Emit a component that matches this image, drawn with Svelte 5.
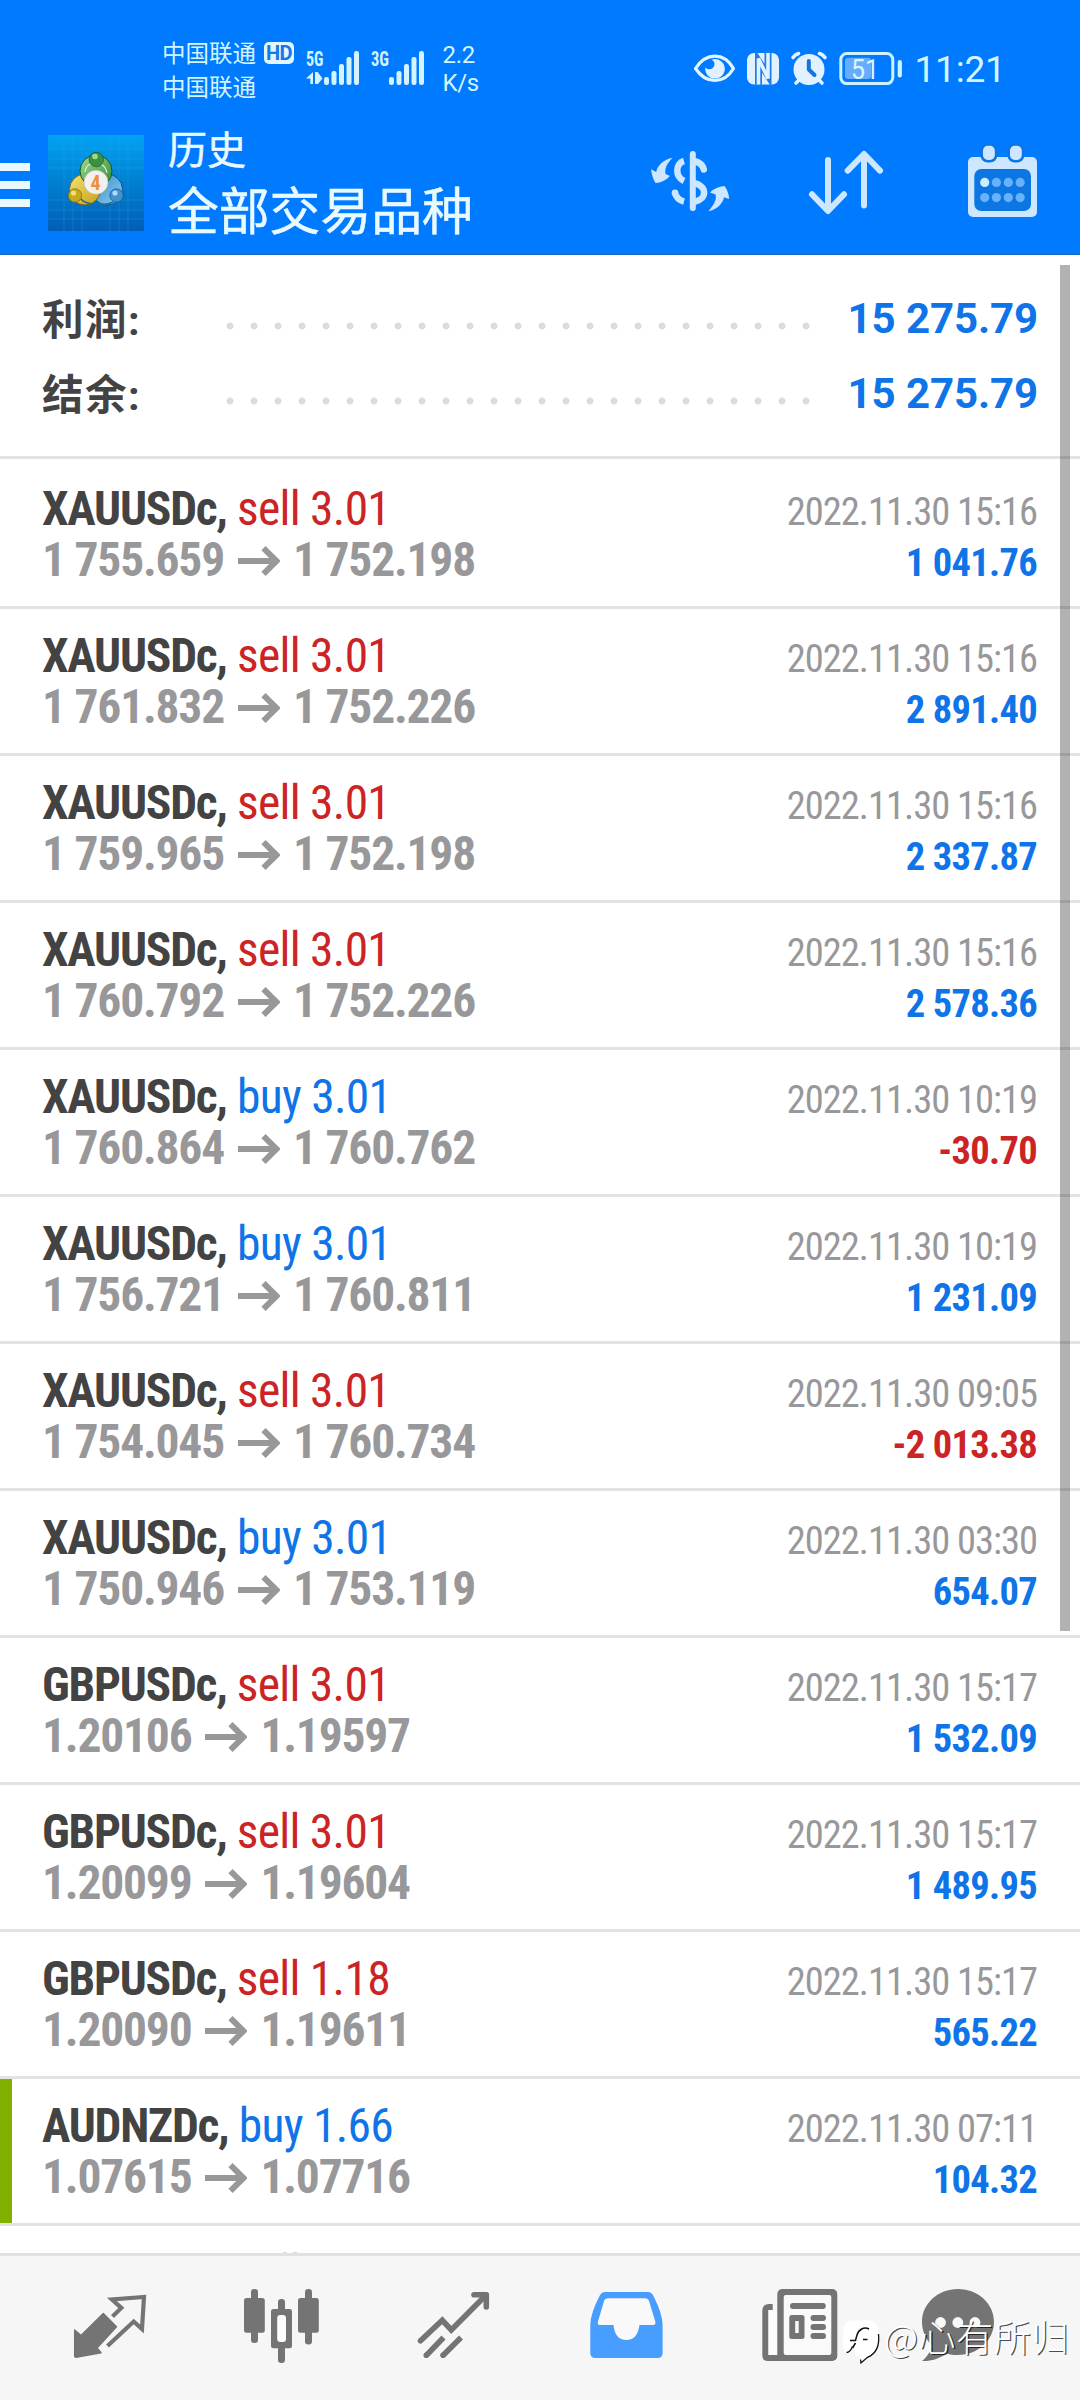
<script>
  const summary = [
    { label: '利润:', value: '15 275.79' },
    { label: '结余:', value: '15 275.79' },
  ];

  const deals = [
    { symbol: 'XAUUSDc', side: 'sell', lots: '3.01', open: '1 755.659', close: '1 752.198', time: '2022.11.30 15:16', profit: '1 041.76' },
    { symbol: 'XAUUSDc', side: 'sell', lots: '3.01', open: '1 761.832', close: '1 752.226', time: '2022.11.30 15:16', profit: '2 891.40' },
    { symbol: 'XAUUSDc', side: 'sell', lots: '3.01', open: '1 759.965', close: '1 752.198', time: '2022.11.30 15:16', profit: '2 337.87' },
    { symbol: 'XAUUSDc', side: 'sell', lots: '3.01', open: '1 760.792', close: '1 752.226', time: '2022.11.30 15:16', profit: '2 578.36' },
    { symbol: 'XAUUSDc', side: 'buy', lots: '3.01', open: '1 760.864', close: '1 760.762', time: '2022.11.30 10:19', profit: '-30.70' },
    { symbol: 'XAUUSDc', side: 'buy', lots: '3.01', open: '1 756.721', close: '1 760.811', time: '2022.11.30 10:19', profit: '1 231.09' },
    { symbol: 'XAUUSDc', side: 'sell', lots: '3.01', open: '1 754.045', close: '1 760.734', time: '2022.11.30 09:05', profit: '-2 013.38' },
    { symbol: 'XAUUSDc', side: 'buy', lots: '3.01', open: '1 750.946', close: '1 753.119', time: '2022.11.30 03:30', profit: '654.07' },
    { symbol: 'GBPUSDc', side: 'sell', lots: '3.01', open: '1.20106', close: '1.19597', time: '2022.11.30 15:17', profit: '1 532.09' },
    { symbol: 'GBPUSDc', side: 'sell', lots: '3.01', open: '1.20099', close: '1.19604', time: '2022.11.30 15:17', profit: '1 489.95' },
    { symbol: 'GBPUSDc', side: 'sell', lots: '1.18', open: '1.20090', close: '1.19611', time: '2022.11.30 15:17', profit: '565.22' },
    { symbol: 'AUDNZDc', side: 'buy', lots: '1.66', open: '1.07615', close: '1.07716', time: '2022.11.30 07:11', profit: '104.32', marked: true },
  ];

  const bars = [
    { x: 0, y: 77 },
    { x: 7.5, y: 71 },
    { x: 15, y: 64 },
    { x: 22.5, y: 57 },
    { x: 30, y: 51 },
  ];
  const calendarDots = [984.7, 996.4, 1008.3, 1020.2];
</script>

<div class="screen">
  <header>
    <div class="status">
      <div class="carriers">
        <div>中国联通</div>
        <div>中国联通</div>
      </div>
      <span class="hd">HD</span>
      <svg class="signal first" viewBox="305 48 56 40" width="56" height="40">
        <text x="306" y="66" textLength="17.5" lengthAdjust="spacingAndGlyphs">5G</text>
        <path d="M313 72V84H310.300V78.500H306ZM315 72H317.700L322.500 78.500 318 84H315Z" />
        {#each bars as b}
          <rect x={324 + b.x} y={b.y} width="5" height={85 - b.y} rx="2.2" />
        {/each}
      </svg>
      <svg class="signal second" viewBox="370 48 56 40" width="56" height="40">
        <text x="371" y="66" textLength="18" lengthAdjust="spacingAndGlyphs">3G</text>
        {#each bars as b}
          <rect x={389 + b.x} y={b.y} width="5" height={85 - b.y} rx="2.2" />
        {/each}
      </svg>
      <div class="speed">
        <div>2.2</div>
        <div>K/s</div>
      </div>
      <div class="right">
        <svg viewBox="692 50 46 38" width="46" height="38">
          <path d="M695.500 68.500C706 52 724 52 733.500 68.500C724 84.500 706 84.500 695.500 68.500Z" fill="none" stroke="#dff6ff" stroke-width="3.200" stroke-linejoin="round" />
          <path d="M713 59.200A9.800 9.800 0 1 1 705.300 67.500C708 70.500 713.500 69.500 714.300 65.500C714.900 62.500 714 61 711.500 60Z" fill="#e2f1ff" />
        </svg>
        <svg class="nfc" viewBox="746 50 34 38" width="34" height="38">
          <rect x="747" y="53" width="32" height="31.500" rx="7" fill="#e2f1ff" />
          <path d="M758.500 86V61L768 75.500V51" fill="none" stroke="#1a7fe8" stroke-width="7" />
          <path d="M758.500 84.500V58.500L768 78.500V53" fill="none" stroke="#e2f1ff" stroke-width="3.600" />
        </svg>
        <svg class="alarm" viewBox="790 50 38 38" width="38" height="38">
          <circle cx="809" cy="69.500" r="15.500" fill="#e2f1ff" />
          <path d="M793 57.500Q795 54.500 798.500 53.500M825 57.500Q823 54.500 819.500 53.500M796 83 801 78M822 83 817 78" fill="none" stroke="#dff6ff" stroke-width="3.600" stroke-linecap="round" />
          <path d="M808.800 61V69.500L814.500 75" fill="none" stroke="#1474dd" stroke-width="4" stroke-linecap="round" stroke-linejoin="round" />
        </svg>
        <svg class="battery" viewBox="838 50 66 38" width="66" height="38">
          <rect x="845" y="57.700" width="26" height="21.300" rx="3" fill="#66adff" />
          <rect x="840.800" y="53.600" width="52" height="30" rx="6" fill="none" stroke="#cdf3ff" stroke-width="3" />
          <rect x="897.700" y="60" width="4.200" height="17.500" rx="2" fill="#cdf3ff" />
          <text x="851" y="78.500" class="level" textLength="28" lengthAdjust="spacingAndGlyphs">51</text>
        </svg>
        <span class="clock">11:21</span>
      </div>
    </div>

    <div class="toolbar">
      <svg class="menu" viewBox="0 160 30 50" width="30" height="50">
        <path d="M0 163h30v8H0zM0 181h30v8H0zM0 199h30v8H0z" fill="#e8f8ff" />
      </svg>
      <svg class="logo" viewBox="48 135 96 96" width="96" height="96">
        <defs>
          <linearGradient id="sky" x1="0" y1="0" x2="0" y2="1">
            <stop offset="0" stop-color="#02a3f2" />
            <stop offset=".5" stop-color="#007fd0" />
            <stop offset="1" stop-color="#005fb6" />
          </linearGradient>
          <linearGradient id="green" x1="0" y1="0" x2="1" y2="1">
            <stop offset="0" stop-color="#a5dc90" />
            <stop offset="1" stop-color="#2c8a34" />
          </linearGradient>
          <linearGradient id="gold" x1="0" y1="0" x2="1" y2="1">
            <stop offset="0" stop-color="#f3e47a" />
            <stop offset="1" stop-color="#c99f10" />
          </linearGradient>
          <linearGradient id="azure" x1="0" y1="0" x2="1" y2="1">
            <stop offset="0" stop-color="#2f86c4" />
            <stop offset="1" stop-color="#8fd0f5" />
          </linearGradient>
        </defs>
        <rect x="48" y="135" width="96" height="96" fill="url(#sky)" />
        <path d="M64 135v96M73 135v96M82 135v96M110 135v96M119 135v96M128 135v96M48 149h96M48 159h96M48 168h96M48 200h96M48 210h96M48 219h96" stroke="#35a8ea" stroke-opacity=".28" fill="none" />
        <circle cx="107" cy="189.500" r="15.500" fill="url(#azure)" stroke="#0a4f8c" />
        <circle cx="85" cy="189.500" r="15.500" fill="url(#gold)" stroke="#6d6a20" />
        <circle cx="96" cy="171" r="16" fill="url(#green)" stroke="#17592b" />
        <path d="M81 199Q84 203 93 204M99 203Q104 206 113 202" fill="none" stroke="#2b6a8e" stroke-width="1.500" />
        <path d="M85 172Q86 165 91 164M101 164Q106 167 107 173" fill="none" stroke="#e0f3d4" stroke-width="1.200" />
        <circle cx="75" cy="195.500" r="6.700" fill="#c7a71d" stroke="#7b6511" stroke-width=".7" />
        <circle cx="73.500" cy="193" r="2.600" fill="#f0df7e" />
        <circle cx="116.500" cy="195.500" r="6.700" fill="#3f93cf" stroke="#135287" stroke-width=".7" />
        <circle cx="115" cy="193" r="2.600" fill="#a9dcf8" />
        <circle cx="96.300" cy="159.500" r="7.200" fill="#3c9140" stroke="#175a26" stroke-width=".7" />
        <circle cx="95" cy="156.500" r="2.800" fill="#a2d796" />
        <circle cx="96" cy="182.300" r="12" fill="#f3f1ef" stroke="#bcb7ae" stroke-width=".6" />
        <text x="90.500" y="190" class="four">4</text>
      </svg>
      <div class="titles">
        <div class="small">历史</div>
        <div class="large">全部交易品种</div>
      </div>
      <svg class="dollar" viewBox="648 145 84 74" width="84" height="74">
        <g fill="none" stroke="#cce7ff" stroke-width="6.500">
          <path d="M684 161C675 163.500 675 176.500 684 181" />
          <path d="M674.800 192.500Q676.500 199.500 684 201.500" />
          <path d="M692.800 154V208" stroke-width="6" stroke-linecap="round" />
          <path d="M694 161Q702.500 163 703.800 169.500" stroke-linecap="round" />
          <path d="M694 183C707.500 186 707.500 199 694 202" />
        </g>
        <circle cx="675" cy="192.800" r="3.300" fill="#cce7ff" />
        <path d="M672.500 157.800C664 159 657 166 656.300 172L651 169.300Q652 177.500 655.500 183Q664 182.500 670 176L665.500 174C664.500 168 667.500 163 672.500 157.800Z" fill="#cce7ff" />
        <path d="M708.300 211.200C714 205 717 199 715.500 194.500L710 192.500Q715 187 724.500 186Q729 192 729 199L724 197.300C723 203 717 210 708.300 211.200Z" fill="#cce7ff" />
      </svg>
      <svg class="sort" viewBox="806 145 80 74" width="80" height="74">
        <path d="M828 160V209M812 194.300 828 211 844 194.300M864 205.500V156M847.700 170.700 864 154 880 170.700" fill="none" stroke="#cce7ff" stroke-width="6" stroke-linecap="round" stroke-linejoin="round" />
      </svg>
      <svg class="calendar" viewBox="966 143 74 76" width="74" height="76">
        <rect x="968" y="157" width="69" height="60" rx="5" fill="#cce7ff" />
        <rect x="974.300" y="169" width="56.700" height="42" rx="7" fill="#0c76e2" />
        <g fill="#cce7ff" stroke="#0c76e2" stroke-width="2.600">
          <rect x="981.700" y="144.500" width="14.400" height="16.800" rx="6" />
          <rect x="1008.700" y="144.500" width="14.400" height="16.800" rx="6" />
        </g>
        {#each calendarDots as x, i}
          <circle cx={x} cy="182.400" r="4.600" fill={i === 0 ? '#cdeeff' : '#68b1ff'} />
          <circle cx={x} cy="197.600" r="4.600" fill="#68b1ff" />
        {/each}
      </svg>
    </div>
  </header>

  <main>
    <section class="summary">
      {#each summary as s}
        <div class="line">
          <span class="label">{s.label}</span>
          <span class="leader"></span>
          <span class="total">{s.value}</span>
        </div>
      {/each}
    </section>

    <section class="deals">
      {#each deals as d}
        <article class:marked={d.marked}>
          <div class="left">
            <div class="name"><b>{d.symbol},</b> <span class={d.side}>{d.side} {d.lots}</span></div>
            <div class="prices">
              <span>{d.open}</span>
              <svg viewBox="0 0 42 30" width="42" height="30">
                <path d="M0 15H37M25.500 2.200 38.500 15 25.500 27.800" fill="none" stroke="#98989a" stroke-width="6" />
              </svg>
              <span>{d.close}</span>
            </div>
          </div>
          <div class="info">
            <time>{d.time}</time>
            <div class="profit" class:loss={d.profit.startsWith('-')}>{d.profit}</div>
          </div>
        </article>
      {/each}
      <article>
        <div class="left">
          <div class="name"><b>XAUUSDc,</b> <span class="sell">sell 3.01</span></div>
        </div>
      </article>
    </section>
    <div class="scrollbar"></div>
  </main>

  <nav>
    <svg viewBox="70 2286 80 80" width="80" height="80">
      <path d="M103.300 2313.500 116.500 2326.700 97 2348 101 2352.800 76 2357.300Q74.700 2357.300 74.700 2356V2330L81 2335.500Z" fill="#747474" stroke="#747474" stroke-width="1.500" stroke-linejoin="round" />
      <path d="M112.500 2316.500 121.300 2307.900 112 2299.500 144 2297 142 2329 133.700 2321.500 107.500 2346" fill="none" stroke="#747474" stroke-width="4.200" />
    </svg>
    <svg viewBox="242 2286 80 80" width="80" height="80">
      <g fill="#747474">
        <rect x="244" y="2298" width="20.800" height="34.800" rx="2.500" />
        <rect x="251" y="2289" width="7" height="54" rx="3.200" />
        <rect x="271" y="2309" width="21" height="39.300" rx="2.500" />
        <rect x="278" y="2299" width="7" height="64" rx="3.200" />
        <rect x="298" y="2298" width="20.800" height="34.800" rx="2.500" />
        <rect x="305" y="2289" width="7" height="55.500" rx="3.200" />
      </g>
      <rect x="277.200" y="2315" width="8.800" height="27" rx="3" fill="#fcfcfc" />
    </svg>
    <svg viewBox="414 2286 80 80" width="80" height="80">
      <g fill="none" stroke="#747474" stroke-width="5.600">
        <path d="M420.500 2340.800 442.300 2320.300 451.300 2330 486 2295" stroke-linecap="round" />
        <path d="M474 2294.700H486.300V2307" stroke-linecap="round" stroke-linejoin="round" />
        <path d="M426.500 2355.300 443.500 2337.500M443.200 2355.300 461 2337.500" />
      </g>
      <circle cx="426.300" cy="2355.300" r="2.800" fill="#747474" />
      <circle cx="443" cy="2355.300" r="2.800" fill="#747474" />
    </svg>
    <svg viewBox="586 2286 80 80" width="80" height="80">
      <path d="M605 2292H648Q651.500 2292 653.500 2296Q662.600 2314 662.600 2325V2353Q662.600 2358 657.600 2358H595.300Q590.300 2358 590.300 2353V2325Q590.300 2314 599.500 2296Q601.500 2292 605 2292Z" fill="#489eff" />
      <path d="M608 2298.200H645Q648 2298.200 649 2301L655.300 2321.500Q656 2325 653 2325H639.500C638 2335 634 2340 626.400 2340C619 2340 614.500 2335 613.500 2325H600Q597 2325 598 2321.500L604 2301Q605 2298.200 608 2298.200Z" fill="#f9f9f9" />
    </svg>
    <svg viewBox="758 2286 80 80" width="80" height="80">
      <path d="M772.700 2304V2310H768.500V2355H790V2361H768Q762.300 2361 762.300 2355.500V2311Q762.300 2304 769 2304Z" fill="#747474" />
      <rect x="768.500" y="2310" width="9" height="45" fill="#fcfcfc" />
      <rect x="777.300" y="2289" width="60" height="72" rx="5" fill="#747474" />
      <rect x="783.700" y="2295" width="47.600" height="60" rx="2" fill="#fafafa" />
      <g fill="#747474">
        <rect x="790" y="2303" width="35.800" height="6" rx="3" />
        <rect x="789.300" y="2315" width="15.200" height="24" rx="2.500" />
        <rect x="810.500" y="2315" width="15.500" height="6" rx="3" />
        <rect x="810.500" y="2324" width="15.500" height="6" rx="3" />
        <rect x="810.500" y="2333" width="15.500" height="6" rx="3" />
      </g>
      <rect x="795.200" y="2321" width="3.500" height="12" fill="#fafafa" />
    </svg>
    <svg viewBox="918 2286 80 80" width="80" height="80">
      <path d="M958 2289C978 2289 994 2303.500 994 2322C994 2340 978 2355 958 2355C953 2355 950 2354.500 947 2353.500C939 2359 930 2361.500 922 2361C927 2357 931 2351 932 2345.500C926 2340 922 2331 922 2322C922 2303.500 938 2289 958 2289Z" fill="#747474" />
      <g fill="#f9f9f9">
        <circle cx="940.500" cy="2322.500" r="5.400" />
        <circle cx="957.800" cy="2322.500" r="5.400" />
        <circle cx="975" cy="2322.500" r="5.400" />
      </g>
    </svg>
  </nav>

  <div class="watermark">
    <svg viewBox="842 2318 42 48" width="42" height="48">
      <path d="M851 2320.500H870C877 2321 879.300 2328 879.300 2339C879 2352 873 2356 866.500 2357.500L860.500 2363L860.500 2358C856 2357.500 854.500 2354 855 2348L852 2346.500C850 2352 847.500 2353.500 845 2352C842 2348 842.500 2337 843.500 2330C844.500 2324 846 2321 851 2320.500Z" fill="#fff" />
      <path d="M878.500 2334Q880.500 2352 867.500 2357.300L861 2363L860.600 2359.500M852.500 2346.500Q850 2352.500 846.500 2352.500" fill="none" stroke="#111" stroke-width="1.300" />
      <path d="M869 2329C864 2326.500 858.500 2329.500 857 2335L855.500 2340.500H850M855.500 2343 852.500 2348M863 2339.500H867.500" fill="none" stroke="#111" stroke-width="1.500" />
    </svg>
    <span>@心有所归</span>
  </div>
</div>

<style>
  :global(body) {
    background: #fff;
  }
  .screen {
    position: relative;
    width: 1080px;
    height: 2400px;
    display: flex;
    flex-direction: column;
    overflow: hidden;
    background: #fff;
    font-family: Roboto, 'Noto Sans CJK SC', sans-serif;
  }
  svg {
    display: block;
    flex: none;
  }

  header {
    box-sizing: border-box;
    flex: none;
    height: 255px;
    background: #007aff;
    border-bottom: 2px solid #1c6dc6;
    color: #d3f5ff;
  }
  .status {
    display: flex;
    align-items: flex-start;
    height: 84px;
    padding: 36px 0 0 162px;
  }
  .carriers {
    width: 102px;
    margin-top: -1px;
    font: 23.500px/34px 'Noto Sans CJK SC', sans-serif;
  }
  .hd {
    box-sizing: border-box;
    width: 30px;
    height: 21.500px;
    margin-top: 6px;
    border-radius: 5px;
    background: #e2f6ff;
    color: #1478e6;
    font: 700 20px/22px Roboto, sans-serif;
    letter-spacing: -0.5px;
    text-align: center;
  }
  .signal {
    margin-top: 12px;
    fill: #d3f3ff;
    font: 700 20.500px 'Roboto Condensed', sans-serif;
  }
  .first {
    margin-left: 11px;
  }
  .second {
    margin-left: 9px;
  }
  .speed {
    width: 60px;
    margin: 5px 0 0 16.500px;
    font-size: 24px;
    line-height: 28px;
    letter-spacing: -0.300px;
  }
  .right {
    display: flex;
    align-items: flex-start;
    margin: 14px 0 0 189.500px;
  }
  .nfc {
    margin-left: 8px;
  }
  .alarm,
  .battery {
    margin-left: 10px;
  }
  .level {
    font: 27px Roboto, sans-serif;
    fill: #d9f6ff;
  }
  .clock {
    margin: 0 0 0 10.500px;
    font-size: 37px;
    line-height: 40px;
    letter-spacing: -0.200px;
  }

  .toolbar {
    display: flex;
    align-items: flex-start;
    color: #e9faff;
  }
  .menu {
    margin-top: 40px;
  }
  .logo {
    margin: 15px 0 0 18px;
  }
  .four {
    font: 700 20px 'Roboto Condensed', sans-serif;
    fill: #ee9038;
  }
  .titles {
    width: 480px;
    margin-left: 24px;
    font-family: 'Noto Sans CJK SC', sans-serif;
    -webkit-text-stroke: 0.500px #e9faff;
  }
  .small {
    font-size: 39px;
    line-height: 54px;
  }
  .large {
    font-size: 50.800px;
    line-height: 68px;
  }
  .dollar,
  .sort {
    margin-top: 25px;
  }
  .sort {
    margin-left: 74px;
  }
  .calendar {
    margin: 23px 0 0 80px;
  }

  main {
    position: relative;
    flex: none;
    height: 1998px;
    overflow: hidden;
  }
  .summary {
    box-sizing: border-box;
    height: 204px;
    padding: 26px 42px 0 42px;
    border-bottom: 3px solid #e3e3e3;
  }
  .line {
    display: flex;
    height: 75px;
    line-height: 75px;
    font-weight: 700;
  }
  .label {
    width: 176px;
    padding-top: 2px;
    color: #434343;
    font-size: 41.500px;
    letter-spacing: 1.500px;
  }
  .leader {
    width: 600px;
    background: radial-gradient(circle at 12px 45px, #dcdcdc 3px, transparent 4px) 0 0 / 24px 75px repeat-x;
  }
  .total {
    margin-left: auto;
    color: #0f74e8;
    font-size: 42px;
    letter-spacing: -0.100px;
  }

  .deals {
    padding-top: 3px;
  }
  article {
    box-sizing: border-box;
    display: flex;
    justify-content: space-between;
    height: 147px;
    padding: 22px 43px 0 42px;
    border-bottom: 3px solid #e3e3e3;
    font-family: 'Roboto Condensed', sans-serif;
    line-height: 51px;
    white-space: nowrap;
  }
  .marked {
    background: linear-gradient(#80b000, #80b000) 0 0 / 12px 100% no-repeat;
  }
  .left {
    font-size: 47.500px;
  }
  .name {
    height: 51px;
    color: #434343;
    letter-spacing: -0.700px;
  }
  .name b {
    letter-spacing: -1.250px;
  }
  .sell {
    color: #cc2424;
  }
  .buy {
    color: #0f74e8;
  }
  .prices {
    display: flex;
    height: 51px;
    color: #98989a;
    font-weight: 700;
    letter-spacing: -1.200px;
  }
  .prices svg {
    margin: 11px 13px 0 14px;
  }
  .info {
    padding-top: 2px;
    text-align: right;
    font-size: 38.500px;
  }
  time {
    display: block;
    color: #98989a;
    letter-spacing: -1px;
  }
  .profit {
    color: #0f74e8;
    font-weight: 700;
    letter-spacing: -0.700px;
  }
  .loss {
    color: #cc2424;
  }
  .scrollbar {
    position: absolute;
    top: 10px;
    left: 1060px;
    width: 10px;
    height: 1366px;
    background: rgba(0, 0, 0, 0.3);
  }

  nav {
    box-sizing: border-box;
    flex: none;
    display: grid;
    grid-template-columns: repeat(5, 172px) 148px;
    justify-items: center;
    align-items: start;
    height: 147px;
    padding: 30px 0 0 24px;
    border-top: 3px solid #e1e1e1;
    background: #f6f6f6;
  }

  .watermark {
    position: absolute;
    top: 2318px;
    left: 842px;
    display: flex;
    color: #fff;
    font: 300 37.300px/36px 'Noto Sans CJK SC', sans-serif;
    letter-spacing: 0.400px;
    text-shadow: 1.300px 1.300px 0.500px rgba(0, 0, 0, 0.7);
    white-space: nowrap;
  }
</style>
